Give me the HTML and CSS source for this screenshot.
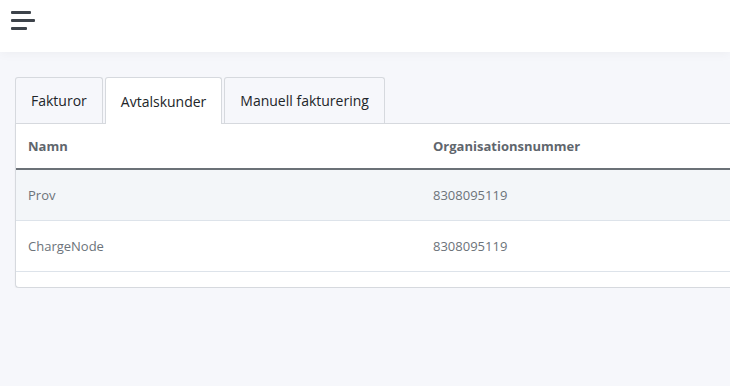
FILE: index.html
```html
<!DOCTYPE html>
<html lang="sv">
<head>
  <meta charset="UTF-8">
  <meta name="viewport" content="width=device-width, initial-scale=1.0">
  <title>Avtalskunder</title>
  <link rel="stylesheet" href="styles.css">
</head>
<body>
  <header class="topbar">
    <button class="menu-toggle" aria-label="Meny">
      <span class="bar bar-1"></span>
      <span class="bar bar-2"></span>
      <span class="bar bar-3"></span>
    </button>
  </header>

  <main class="content">
    <div class="tabs">
      <div class="tab">Fakturor</div>
      <div class="tab active">Avtalskunder</div>
      <div class="tab">Manuell fakturering</div>
    </div>

    <div class="card">
      <table class="customers">
        <thead>
          <tr>
            <th class="col-name">Namn</th>
            <th>Organisationsnummer</th>
          </tr>
        </thead>
        <tbody>
          <tr class="striped">
            <td>Prov</td>
            <td>8308095119</td>
          </tr>
          <tr>
            <td>ChargeNode</td>
            <td>8308095119</td>
          </tr>
        </tbody>
      </table>
      <div class="card-footer"></div>
    </div>
  </main>
</body>
</html>
```

FILE: styles.css
```css
* {
  box-sizing: border-box;
}

body {
  margin: 0;
  font-family: 'Open Sans', 'Noto Sans', sans-serif;
  background-color: #f6f7fb;
  color: #212529;
}

.topbar {
  height: 52px;
  background-color: #fff;
  box-shadow: 0 2px 10px rgba(0, 0, 0, 0.04);
  display: flex;
  align-items: flex-start;
}

.menu-toggle {
  border: none;
  background: none;
  padding: 11px 0 0 11px;
  display: flex;
  flex-direction: column;
  gap: 5px;
  cursor: pointer;
}

.bar {
  display: block;
  height: 3px;
  background-color: #3d434a;
  border-radius: 1px;
}

.bar-1 { width: 20px; }
.bar-2 { width: 24px; }
.bar-3 { width: 16px; }

/* card runs off the right edge in the original, so no right padding */
.content {
  padding: 25px 0 0 15px;
}

.tabs {
  display: flex;
  gap: 2px;
  position: relative;
  z-index: 1;
}

.tab {
  height: 46px;
  padding: 0 15px;
  display: flex;
  align-items: center;
  font-size: 14px;
  color: #212529;
  background-color: #f6f7fb;
  border: 1px solid #d6d9de;
  border-bottom: none;
  border-radius: 3px 3px 0 0;
  margin-bottom: -1px;
}

.tab.active {
  background-color: #fff;
  height: 47px;
}

.card {
  background-color: #fff;
  border: 1px solid #d6d9de;
  border-right: none;
  border-radius: 0 0 0 4px;
  box-shadow: 0 1px 2px rgba(0, 0, 0, 0.06);
}

.customers {
  width: 100%;
  border-collapse: collapse;
  font-size: 13px;
}

.customers th {
  text-align: left;
  font-weight: 700;
  color: #5f666d;
  height: 45px;
  padding: 0 12px;
  border-bottom: 2px solid #6b7177;
}

.customers .col-name {
  width: 405px;
}

.customers td {
  color: #6c737a;
  height: 51px;
  padding: 0 12px;
  border-bottom: 1px solid #dde3ea;
}

.customers tr.striped td {
  background-color: #f3f6f9;
}

.card-footer {
  height: 15px;
}
```
